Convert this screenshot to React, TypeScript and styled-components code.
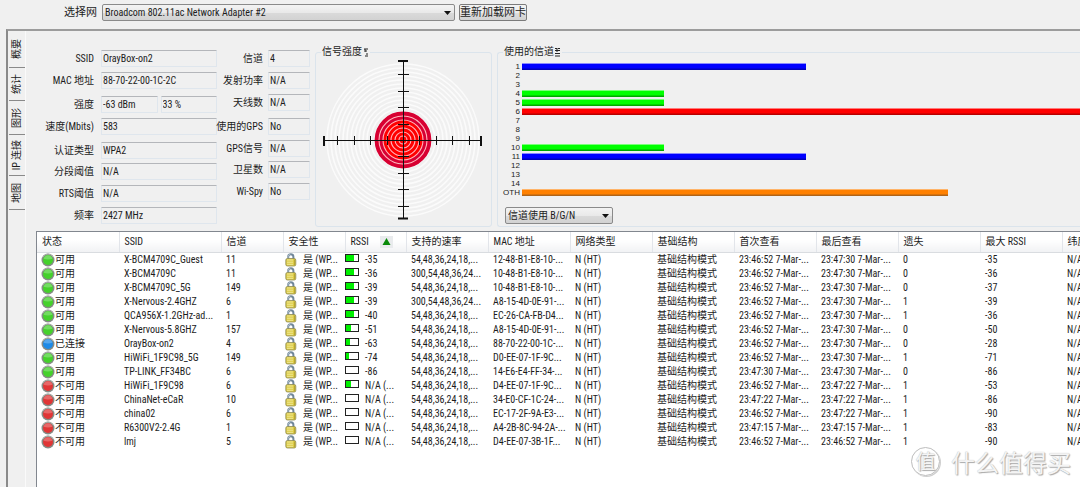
import React from "react";
import styled, { createGlobalStyle } from "styled-components";

const GlobalStyle = createGlobalStyle`
  *, *::before, *::after { box-sizing: border-box; }
  body {
    margin: 0;
    background: #f0f0f0;
    color: #1c1c1c;
    font: 10px/14px "Roboto Condensed", Roboto, "Noto Sans CJK SC", sans-serif;
    overflow: hidden;
  }
  button, input, select { font: inherit; color: inherit; }
`;

const Window = styled.div`
  display: flex;
  flex-direction: column;
  min-height: 100vh;
  overflow: hidden;
  position: relative;
`;

const AdapterBar = styled.header`
  display: flex;
  align-items: center;
  gap: 4px;
  height: 29px;
  padding: 0 0 4px 64px;
`;

const AdapterLabel = styled.label`
  width: 34px;
  font-size: 11px;
  white-space: nowrap;
`;

const SelectBox = styled.div<{ $width: number }>`
  position: relative;
  width: ${(p) => p.$width}px;
  height: 17px;
`;

const Select = styled.select`
  appearance: none;
  display: block;
  width: 100%;
  height: 17px;
  padding: 0 16px 0 2px;
  border: 1px solid #8a8a8a;
  border-radius: 2px;
  background: linear-gradient(#f3f3f3, #e9e9e9 50%, #dadada 52%, #d2d2d2);
  line-height: 14px;
`;

const SelectArrow = styled.svg`
  position: absolute;
  right: 4px;
  top: 7px;
  pointer-events: none;
`;

const ReloadButton = styled.button`
  height: 17px;
  padding: 0;
  width: 68px;
  border: 1px solid #7b7b7b;
  border-radius: 2px;
  background: linear-gradient(#f3f3f3, #ebebeb 50%, #dddddd 52%, #d2d2d2);
  font-size: 11px;
  line-height: 14px;
  white-space: nowrap;
`;

const Workspace = styled.div`
  flex: 1;
  display: flex;
  margin-left: 6px;
  border-top: 2px solid #9c9c9c;
  border-left: 2px solid #8a8a8a;
`;

const TabStrip = styled.nav`
  flex: none;
  width: 18px;
  padding-left: 1px;
  display: flex;
  flex-direction: column;
  border-right: 1px solid #fafafa;
`;

const Tab = styled.button<{ $height: number }>`
  height: ${(p) => p.$height}px;
  width: 16px;
  padding: 0;
  border: 0;
  border-bottom: 1px solid #8a8a8a;
  background: none;
  display: flex;
  align-items: center;
  justify-content: center;
`;

const TabText = styled.span`
  writing-mode: vertical-rl;
  text-orientation: sideways;
  transform: rotate(180deg);
  line-height: 12px;
  white-space: nowrap;
`;

const Page = styled.main`
  flex: 1;
  min-width: 0;
  display: flex;
  flex-direction: column;
  padding: 14px 0 0 10px;
`;

const Overview = styled.section`
  display: flex;
  align-items: flex-start;
  height: 186px;
`;

const Details = styled.div`
  flex: none;
  display: grid;
  width: 181px;
  padding-top: 5px;
  grid-template-rows: 22px 24px 22px 24px 21px 22px 22px 22px;
`;

const RadioDetails = styled(Details)`
  width: 93px;
  margin-right: 5px;
  grid-template-rows: 22px 22px 24px 22px 21px 22px 22px;
`;

const DetailRow = styled.div<{ $labelWidth: number; $gap: number }>`
  display: grid;
  grid-template-columns: ${(p) => p.$labelWidth}px 1fr;
  column-gap: ${(p) => p.$gap}px;
  align-items: start;
`;

const DetailLabel = styled.label`
  justify-self: end;
  padding-top: 2px;
  white-space: nowrap;
`;

const FieldPair = styled.div`
  display: grid;
  grid-template-columns: 1fr 1fr;
  gap: 3px;
`;

const Field = styled.input`
  width: 100%;
  min-width: 0;
  height: 17px;
  padding: 0 1px;
  border: 1px solid #dfe6ed;
  border-top-color: #b4b6ba;
  border-radius: 1px;
  background: #f0f0f0;
  line-height: 14px;
`;

const Group = styled.fieldset`
  margin: 0;
  border: 1px solid #dbe4ec;
  border-radius: 3px;
  height: 182px;
  padding: 0;
  min-width: 0;
`;

const GroupTitle = styled.legend`
  margin-left: 5px;
  padding: 0 1px;
  height: 14px;
  display: flex;
  align-items: center;
`;

const SignalGroup = styled(Group)`
  flex: none;
  width: 177px;
  margin-right: 5px;
`;

const ChannelGroup = styled(Group)`
  flex: 1;
  border-right: 0;
  border-radius: 3px 0 0 3px;
`;

const Radar = styled.svg`
  display: block;
  margin: 1px 0 0 7px;
`;

const Chart = styled.div`
  padding-top: 3px;
  overflow: hidden;
`;

const ChartRow = styled.div`
  display: grid;
  grid-template-columns: 22px 1fr;
  column-gap: 2px;
  align-items: center;
  height: 9px;
`;

const ChannelName = styled.span`
  justify-self: end;
  font: 8px/9px "Liberation Sans", sans-serif;
`;

const ChannelBar = styled.span<{ $networks: number; $tone: Tone }>`
  width: ${(p) => p.$networks * 142}px;
  height: 7px;
  background: ${(p) => BAR_FILL[p.$tone]};
`;

const ChannelMode = styled.div`
  padding: 10px 0 0 7px;
`;

type Tone = "blue" | "green" | "red" | "orange";

const BAR_FILL: Record<Tone, string> = {
  blue: "linear-gradient(#8a8aff 0 1px, #0000ff 1px 5px, #0000b8 6px)",
  green: "linear-gradient(#7aff7a 0 1px, #00ff00 1px 5px, #00a800 6px)",
  red: "linear-gradient(#ff7a7a 0 1px, #ff0000 1px 5px, #b80000 6px)",
  orange: "linear-gradient(#ffb469 0 1px, #ff8000 1px 5px, #b06418 6px)",
};

const ListView = styled.section`
  flex: 1;
  background: #fff;
  border: 1px solid #82878f;
  border-width: 1px 0 0 1px;
  overflow: hidden;
`;

const Networks = styled.table`
  table-layout: fixed;
  width: 1126px;
  border-collapse: collapse;
`;

const HeadCell = styled.th`
  height: 20px;
  padding: 0 0 0 5px;
  border-right: 1px solid #e2e5ea;
  border-bottom: 1px solid #d9dce0;
  background: linear-gradient(#ffffff 40%, #f1f2f4);
  font-weight: 400;
  text-align: left;
  white-space: nowrap;
`;

const Cell = styled.td<{ $inset?: number }>`
  height: 14px;
  padding: 0 0 0 ${(p) => p.$inset ?? 5}px;
  line-height: 14px;
  white-space: nowrap;
  overflow: hidden;
`;

const CellContent = styled.span<{ $gap: number }>`
  display: flex;
  align-items: center;
  height: 14px;
  gap: ${(p) => p.$gap}px;
`;

const SortHead = styled.span`
  display: flex;
  align-items: center;
  gap: 11px;
`;

const Meter = styled.span`
  width: 14px;
  height: 8px;
  margin-bottom: 3px;
  border: 1px solid #222;
  background: #fff;
`;

const MeterFill = styled.span<{ $level: number }>`
  display: block;
  width: ${(p) => p.$level}px;
  height: 6px;
  background: #00f000;
`;

const Watermark = styled.div`
  position: absolute;
  right: 9px;
  bottom: 11px;
  display: flex;
  align-items: center;
  gap: 11px;
  color: #f4f4f4;
  font: 24px/26px "Noto Sans CJK SC", sans-serif;
  text-shadow: 1px 1px 1px #a8a8a8, 0 0 1px #b4b4b4;
`;

const Badge = styled.span`
  width: 29px;
  height: 29px;
  border: 1px solid #bdbdbd;
  border-radius: 50%;
  box-shadow: 1px 1px 0 #cfcfcf;
  font-size: 20px;
  line-height: 26px;
  text-align: center;
`;

const Arrow = () => (
  <SelectArrow width="7" height="4" viewBox="0 0 7 4" aria-hidden="true">
    <path d="M0 0h7L3.5 4z" fill="#111" />
  </SelectArrow>
);

const ORB = { green: "#45d12c", blue: "#1e8ae6", red: "#e03636" };

const Orb = ({ tone }: { tone: keyof typeof ORB }) => (
  <svg width="14" height="14" viewBox="0 0 14 14" aria-hidden="true">
    <circle cx="7" cy="7" r="6.5" fill="#858b85" />
    <circle cx="7" cy="7" r="5" fill={ORB[tone]} />
    <path d="M2.6 5.8a4.5 4.5 0 0 1 8.800 0Q7 7.200 2.600 5.800z" fill="#fff" opacity=".25" />
    <path d="M1.6 4.4a6 6 0 0 1 10.8 0" fill="none" stroke="#b3b9b3" strokeWidth=".8" />
  </svg>
);

const Lock = () => (
  <svg width="12" height="14" viewBox="0 0 12 14" aria-hidden="true">
    <path d="M3.2 7V3.800a2.600 2.600 0 0 1 5.200 0V7" fill="none" stroke="#71879a" strokeWidth="2" />
    <path d="M3 6V3.800a2.600 2.600 0 0 1 2.400-2.600" fill="none" stroke="#b7c6d1" strokeWidth=".8" />
    <rect x=".8" y="5.500" width="10" height="7.500" rx="1.600" fill="#dccb45" stroke="#8d8a58" strokeWidth=".8" />
    <path d="M2 7h6M2 9.200h6M2 11.300h6" stroke="#f3eca0" strokeWidth=".9" />
    <path d="M9.600 6.500v5.800" stroke="#b5a432" strokeWidth="1" />
  </svg>
);

const SignalRadar = () => {
  const rings = Array.from({ length: 19 }, (_, i) => 4 + i * 4);
  const ticks = [-66, -49, -33, -16, 16, 33, 49, 66];
  return (
    <Radar width="160" height="160" viewBox="-80 -80 160 160" role="img" aria-label="信号强度">
      <circle r="28" fill="#d80032" />
      <circle r="20" fill="#ff0000" />
      {rings.map((r) => (
        <circle key={r} r={r} fill="none" stroke={r < 28 ? "#ffb4bc" : "#fbfbfb"} strokeWidth={r < 28 ? 1.1 : 1.6} />
      ))}
      <circle r="27.2" fill="none" stroke="#d80032" strokeWidth="2.4" />
      <g stroke="#111" strokeWidth="1">
        <path d="M-78.500 .5H78.500M.5 -78.500V78.500" />
        {ticks.map((t) => (
          <path key={t} d={`M${t + 0.5} -4v9M-5 ${t + 0.5}h11`} />
        ))}
      </g>
      <path d="M-79 -4v10M78 -4v10M-5 -79h10M-5 78.500h10" stroke="#111" strokeWidth="2" />
    </Radar>
  );
};

const TABS: [string, number][] = [["概要", 37], ["统计", 33], ["图形", 34], ["IP 连接", 41], ["地图", 34]];

const CONNECTION: [string, string[]][] = [
  ["SSID", ["OrayBox-on2"]],
  ["MAC 地址", ["88-70-22-00-1C-2C"]],
  ["强度", ["-63 dBm", "33 %"]],
  ["速度(Mbits)", ["583"]],
  ["认证类型", ["WPA2"]],
  ["分段阈值", ["N/A"]],
  ["RTS阈值", ["N/A"]],
  ["频率", ["2427 MHz"]],
];

const RADIO: [string, string][] = [
  ["信道", "4"],
  ["发射功率", "N/A"],
  ["天线数", "N/A"],
  ["使用的GPS", "No"],
  ["GPS信号", "N/A"],
  ["卫星数", "N/A"],
  ["Wi-Spy", "No"],
];

const CHANNELS: [string, number, Tone][] = [
  ["1", 2, "blue"], ["2", 0, "blue"], ["3", 0, "blue"], ["4", 1, "green"], ["5", 1, "green"],
  ["6", 4, "red"], ["7", 0, "blue"], ["8", 0, "blue"], ["9", 0, "blue"], ["10", 1, "green"],
  ["11", 2, "blue"], ["12", 0, "blue"], ["13", 0, "blue"], ["14", 0, "blue"], ["OTH", 3, "orange"],
];

const COLUMNS: [string, number][] = [
  ["状态", 82], ["SSID", 102], ["信道", 62], ["安全性", 62], ["RSSI", 61], ["支持的速率", 82], ["MAC 地址", 82],
  ["网络类型", 82], ["基础结构", 82], ["首次查看", 82], ["最后查看", 82], ["遗失", 82], ["最大 RSSI", 82], ["纬度", 101],
];

const STATES = { ok: ["可用", "green"], on: ["已连接", "blue"], no: ["不可用", "red"] } as const;

type Network = [keyof typeof STATES, string, string, number, string, string, string, string, string, string, string];

const R54 = "54,48,36,24,18,...";
const R300 = "300,54,48,36,24...";

const NETWORKS: Network[] = [
  ["ok", "X-BCM4709C_Guest", "11", 8, "-35", R54, "12-48-B1-E8-10-...", "23:46:52", "23:47:30", "0", "-35"],
  ["ok", "X-BCM4709C", "11", 8, "-36", R300, "10-48-B1-E8-10-...", "23:46:52", "23:47:30", "0", "-36"],
  ["ok", "X-BCM4709C_5G", "149", 8, "-39", R54, "10-48-B1-E8-10-...", "23:46:52", "23:47:30", "0", "-37"],
  ["ok", "X-Nervous-2.4GHZ", "6", 8, "-39", R300, "A8-15-4D-0E-91-...", "23:46:52", "23:47:30", "1", "-39"],
  ["ok", "QCA956X-1.2GHz-ad...", "1", 8, "-40", R54, "EC-26-CA-FB-D4...", "23:46:52", "23:47:30", "1", "-36"],
  ["ok", "X-Nervous-5.8GHZ", "157", 5, "-51", R54, "A8-15-4D-0E-91-...", "23:46:52", "23:47:30", "0", "-50"],
  ["on", "OrayBox-on2", "4", 4, "-63", R54, "88-70-22-00-1C-...", "23:46:52", "23:47:30", "0", "-28"],
  ["ok", "HiWiFi_1F9C98_5G", "149", 3, "-74", R54, "D0-EE-07-1F-9C...", "23:46:52", "23:47:30", "1", "-71"],
  ["ok", "TP-LINK_FF34BC", "6", 0, "-86", R54, "14-E6-E4-FF-34-...", "23:47:30", "23:47:30", "0", "-86"],
  ["no", "HiWiFi_1F9C98", "6", 5, "N/A (...", R54, "D4-EE-07-1F-9C...", "23:46:52", "23:47:22", "1", "-53"],
  ["no", "ChinaNet-eCaR", "10", 0, "N/A (...", R54, "34-E0-CF-1C-24-...", "23:47:22", "23:47:22", "1", "-86"],
  ["no", "china02", "6", 0, "N/A (...", R54, "EC-17-2F-9A-E3-...", "23:46:52", "23:47:22", "1", "-90"],
  ["no", "R6300V2-2.4G", "1", 0, "N/A (...", R54, "A4-2B-8C-94-2A-...", "23:47:15", "23:47:15", "1", "-83"],
  ["no", "lmj", "5", 0, "N/A (...", R54, "D4-EE-07-3B-1F...", "23:46:52", "23:46:52", "1", "-90"],
];

export default function App() {
  return (
    <Window>
      <GlobalStyle />
      <AdapterBar>
        <AdapterLabel htmlFor="adapter">选择网</AdapterLabel>
        <SelectBox $width={353}>
          <Select id="adapter">
            <option>Broadcom 802.11ac Network Adapter #2</option>
          </Select>
          <Arrow />
        </SelectBox>
        <ReloadButton type="button">重新加载网卡</ReloadButton>
      </AdapterBar>

      <Workspace>
        <TabStrip aria-label="视图">
          {TABS.map(([name, height]) => (
            <Tab key={name} type="button" $height={height}>
              <TabText>{name}</TabText>
            </Tab>
          ))}
        </TabStrip>

        <Page>
          <Overview>
            <Details>
              {CONNECTION.map(([label, values], i) => (
                <DetailRow key={label} $labelWidth={58} $gap={7}>
                  <DetailLabel htmlFor={`conn-${i}`}>{label}</DetailLabel>
                  <FieldRow values={values} id={`conn-${i}`} label={label} />
                </DetailRow>
              ))}
            </Details>
            <RadioDetails>
              {RADIO.map(([label, value], i) => (
                <DetailRow key={label} $labelWidth={46} $gap={5}>
                  <DetailLabel htmlFor={`radio-${i}`}>{label}</DetailLabel>
                  <Field id={`radio-${i}`} readOnly value={value} />
                </DetailRow>
              ))}
            </RadioDetails>

            <SignalGroup>
              <GroupTitle>
                信号强度
                <svg width="7" height="9" viewBox="0 0 7 9" aria-hidden="true">
                  <path d="M2 1h4M3 1v3M3 3h2M4 6h2M3 8h3" stroke="#222" fill="none" />
                </svg>
              </GroupTitle>
              <SignalRadar />
            </SignalGroup>

            <ChannelGroup>
              <GroupTitle>
                使用的信道
                <svg width="7" height="10" viewBox="0 0 7 10" aria-hidden="true">
                  <path d="M1 1.500h2M4 1.500h2M1 3.500h5M3 1v4M1 6.500h5M1 9h5" stroke="#222" fill="none" />
                </svg>
              </GroupTitle>
              <Chart>
                {CHANNELS.map(([name, networks, tone]) => (
                  <ChartRow key={name}>
                    <ChannelName>{name}</ChannelName>
                    <ChannelBar $networks={networks} $tone={tone} />
                  </ChartRow>
                ))}
              </Chart>
              <ChannelMode>
                <SelectBox $width={108}>
                  <Select aria-label="信道使用">
                    <option>信道使用 B/G/N</option>
                  </Select>
                  <Arrow />
                </SelectBox>
              </ChannelMode>
            </ChannelGroup>
          </Overview>

          <ListView>
            <Networks>
              <colgroup>
                {COLUMNS.map(([name, width]) => (
                  <col key={name} width={width} />
                ))}
              </colgroup>
              <thead>
                <tr>
                  {COLUMNS.map(([name]) => (
                    <HeadCell key={name} scope="col">
                      {name === "RSSI" ? (
                        <SortHead>
                          RSSI
                          <svg width="13" height="12" viewBox="0 0 13 12" aria-hidden="true">
                            <rect width="13" height="12" fill="#e9ebed" />
                            <path d="M6.500 2l4 7h-8z" fill="#0a8a0a" />
                          </svg>
                        </SortHead>
                      ) : (
                        name
                      )}
                    </HeadCell>
                  ))}
                </tr>
              </thead>
              <tbody>
                {NETWORKS.map(([state, ssid, channel, level, rssi, rates, mac, first, last, lost, max]) => (
                  <tr key={ssid}>
                    <Cell $inset={4}>
                      <CellContent $gap={0}>
                        <Orb tone={STATES[state][1]} />
                        {STATES[state][0]}
                      </CellContent>
                    </Cell>
                    <Cell>{ssid}</Cell>
                    <Cell>{channel}</Cell>
                    <Cell $inset={2}>
                      <CellContent $gap={6}>
                        <Lock />
                        是 (WP...
                      </CellContent>
                    </Cell>
                    <Cell $inset={0}>
                      <CellContent $gap={6}>
                        <Meter>
                          <MeterFill $level={level} />
                        </Meter>
                        {rssi}
                      </CellContent>
                    </Cell>
                    <Cell>{rates}</Cell>
                    <Cell>{mac}</Cell>
                    <Cell>N (HT)</Cell>
                    <Cell>基础结构模式</Cell>
                    <Cell>{first} 7-Mar-...</Cell>
                    <Cell>{last} 7-Mar-...</Cell>
                    <Cell>{lost}</Cell>
                    <Cell>{max}</Cell>
                    <Cell>N/A</Cell>
                  </tr>
                ))}
              </tbody>
            </Networks>
          </ListView>
        </Page>
      </Workspace>

      <Watermark>
        <Badge>值</Badge>
        什么值得买
      </Watermark>
    </Window>
  );
}

function FieldRow({ values, id, label }: { values: string[]; id: string; label: string }) {
  if (values.length === 1) return <Field id={id} readOnly value={values[0]} />;
  return (
    <FieldPair>
      {values.map((value, i) => (
        <Field key={value} id={i === 0 ? id : undefined} aria-label={label} readOnly value={value} />
      ))}
    </FieldPair>
  );
}
